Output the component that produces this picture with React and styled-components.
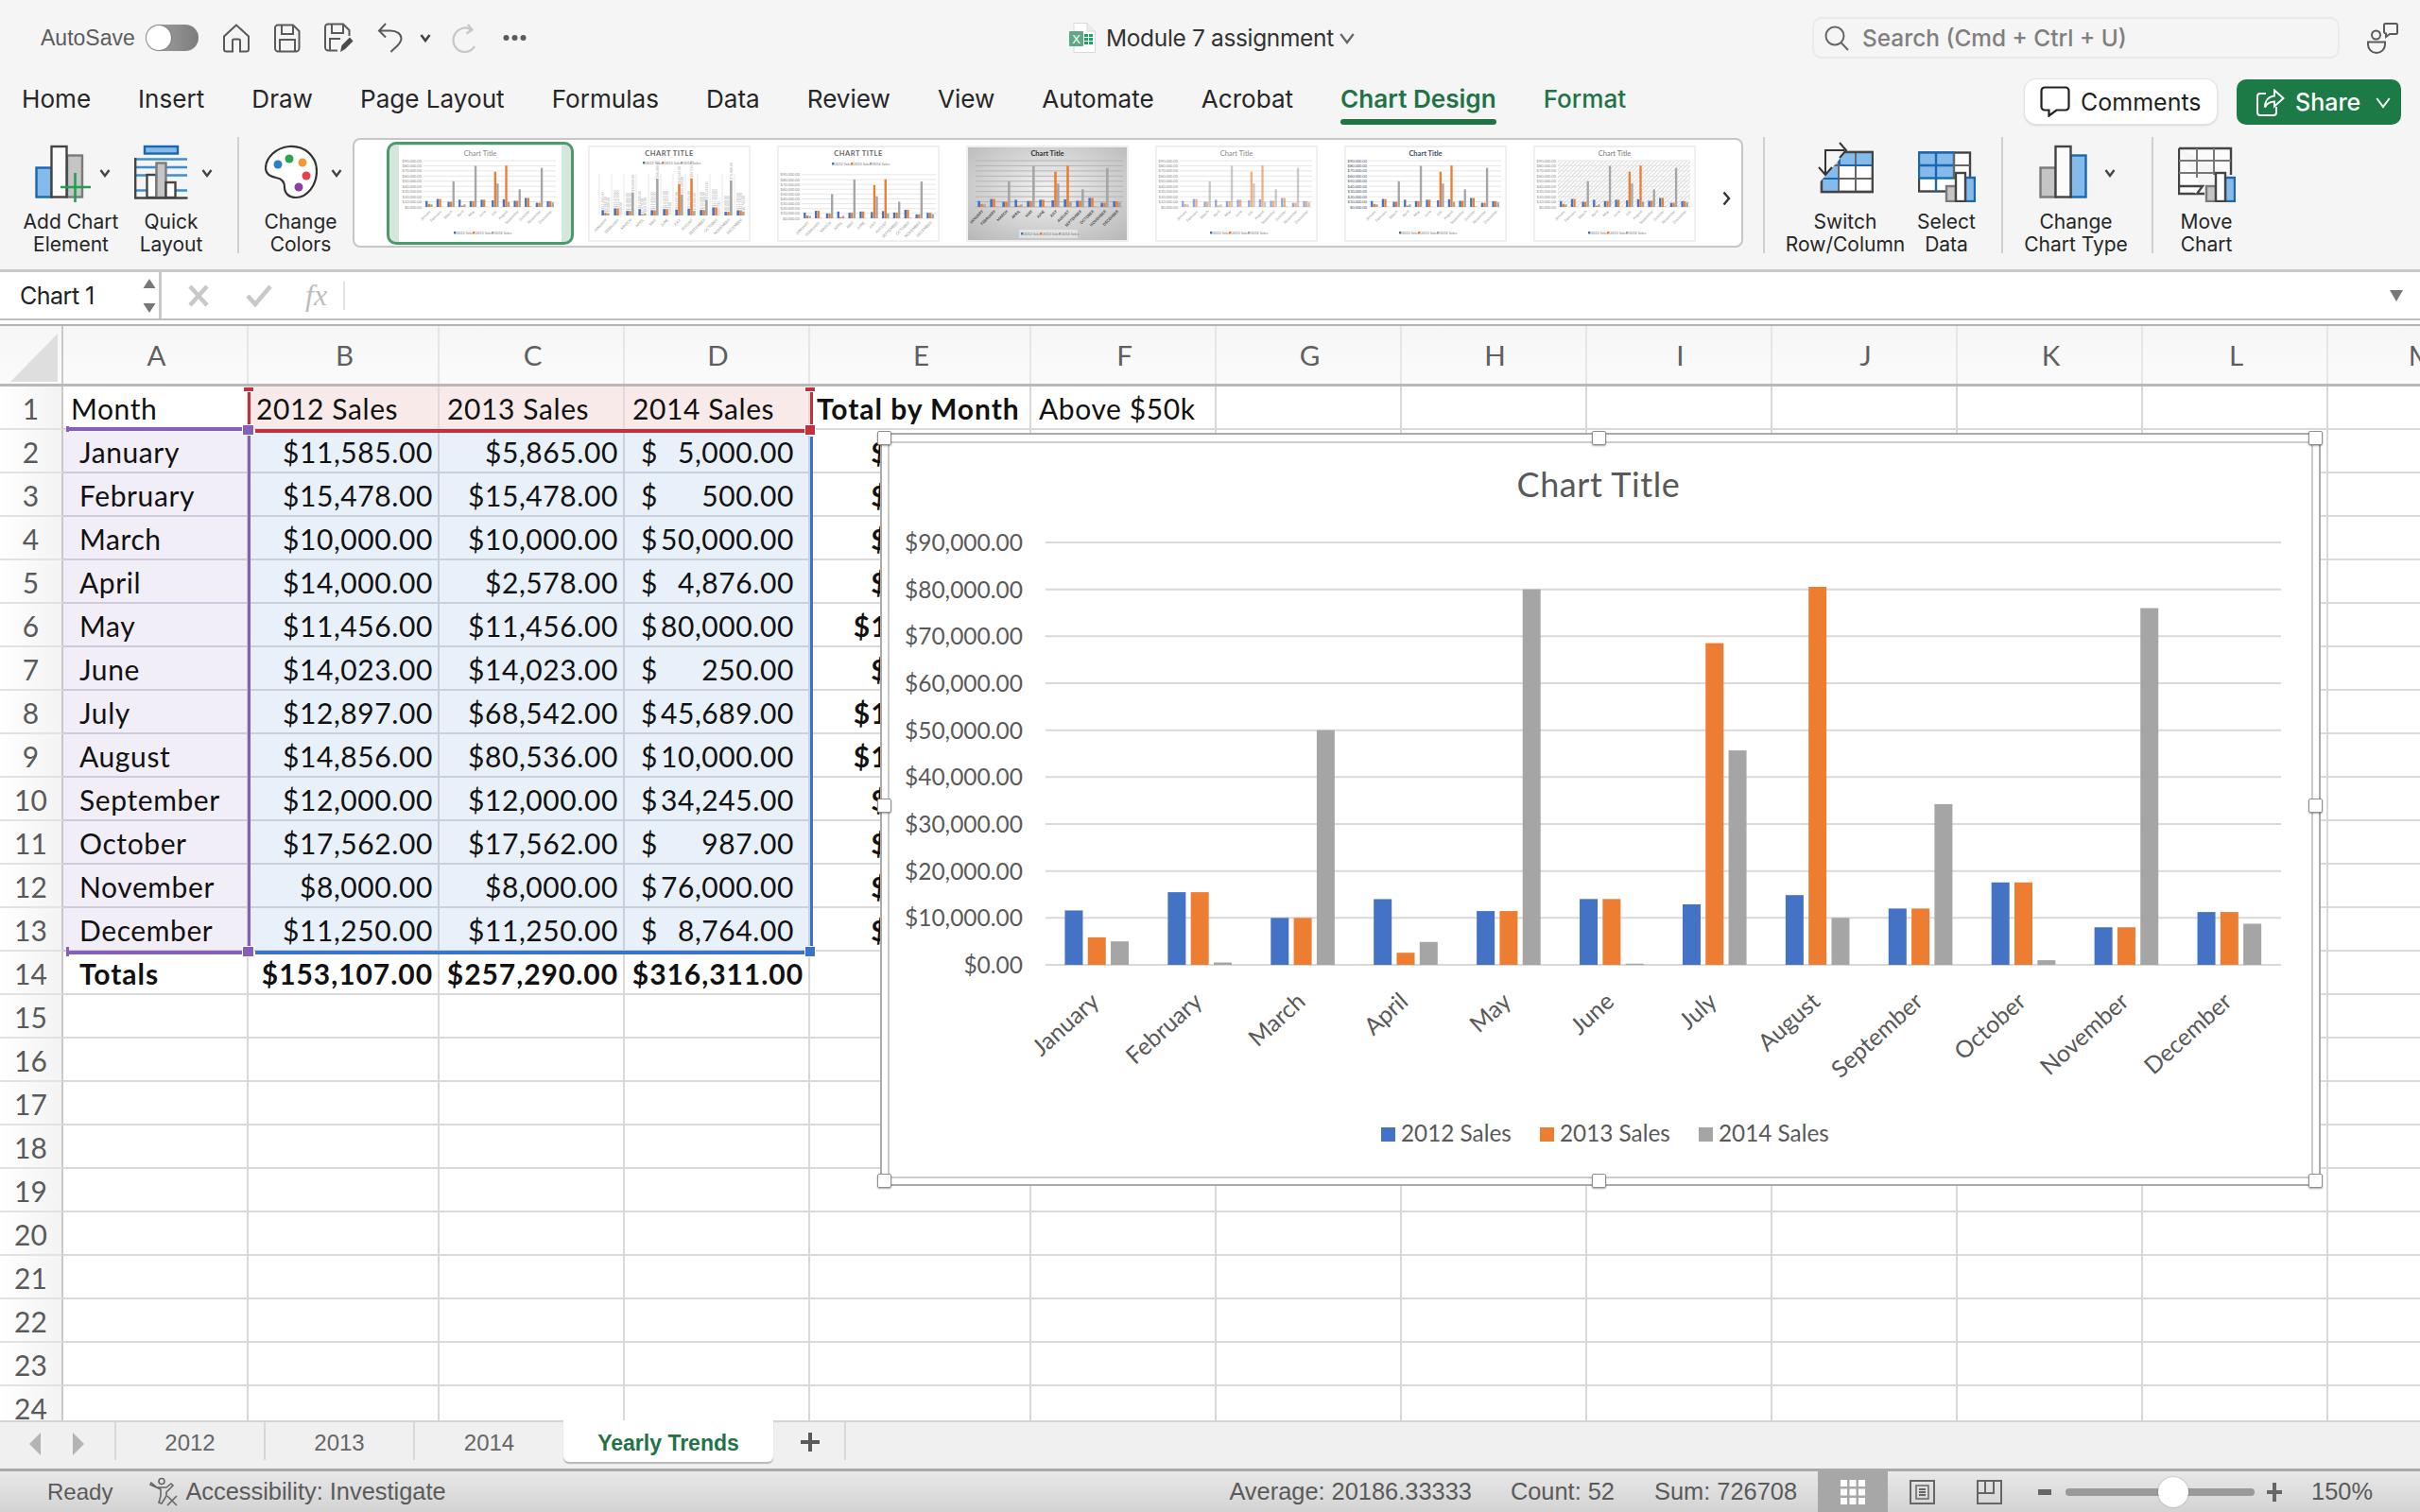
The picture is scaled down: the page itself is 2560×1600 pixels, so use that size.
import React from "react";
import styled, { createGlobalStyle, css } from "styled-components";

const UI = `Inter, "Liberation Sans", sans-serif`;
const HELV = `"Liberation Sans", Arial, sans-serif`;
const CALI = `Lato, "Liberation Sans", sans-serif`;

const BLUE = "#4472C4";
const ORANGE = "#ED7D31";
const GRAY = "#A5A5A5";

const sales = [
  ["January", 11585, 5865, 5000],
  ["February", 15478, 15478, 500],
  ["March", 10000, 10000, 50000],
  ["April", 14000, 2578, 4876],
  ["May", 11456, 11456, 80000],
  ["June", 14023, 14023, 250],
  ["July", 12897, 68542, 45689],
  ["August", 14856, 80536, 10000],
  ["September", 12000, 12000, 34245],
  ["October", 17562, 17562, 987],
  ["November", 8000, 8000, 76000],
  ["December", 11250, 11250, 8764],
];

const money = (n) =>
  n.toLocaleString("en-US", { minimumFractionDigits: 2, maximumFractionDigits: 2 });

const Global = createGlobalStyle`
  html, body { margin: 0; padding: 0; background: #fff; }
  body { width: 2560px; height: 1600px; overflow: hidden; font-family: ${UI}; }
  * { box-sizing: border-box; }
`;

const Page = styled.div`
  width: 2560px;
  height: 1600px;
  display: flex;
  flex-direction: column;
  background: #fff;
  overflow: hidden;
`;

/* title bar */
const TitleBar = styled.header`
  height: 75px;
  flex: none;
  background: #f5f5f5;
  display: grid;
  grid-template-columns: 1131px 786px 1fr;
  align-items: center;
  padding-top: 5px;
`;
const Quick = styled.div`
  display: flex;
  align-items: center;
  padding-left: 43px;
  gap: 25px;
  color: #555;
`;
const AutoSave = styled.span`
  font: 400 23px ${HELV};
  color: #5c5c5c;
  margin-right: -13px;
  width: 99px;
`;
const Toggle = styled.span`
  width: 56px;
  height: 28px;
  border-radius: 14px;
  background: linear-gradient(90deg, #a8a8a8, #7c7c7c);
  display: flex;
  align-items: center;
  padding-left: 1px;
  &::before {
    content: "";
    width: 26px;
    height: 26px;
    border-radius: 50%;
    background: #fff;
    box-shadow: 0 0 2px rgba(0, 0, 0, 0.5);
  }
`;
const QuickChevron = styled.span`
  display: flex;
  margin: 0 -3px 0 -7px;
`;
const DocTitle = styled.div`
  display: flex;
  align-items: center;
  gap: 11px;
  font: 400 24.5px ${UI};
  color: #333;
  letter-spacing: -0.35px;
`;
const DocChevron = styled.span`
  display: flex;
  margin-left: -6px;
`;
const Search = styled.div`
  width: 558px;
  height: 44px;
  border: 2px solid #ebebeb;
  border-radius: 10px;
  display: flex;
  align-items: center;
  gap: 14px;
  padding-left: 11px;
  font: 500 24.4px ${UI};
  color: #7f7f7f;
`;
const TopRight = styled.div`
  display: flex;
  align-items: center;
  gap: 29px;
`;

/* tab row */
const TabRow = styled.nav`
  height: 70px;
  flex: none;
  background: #f5f5f5;
  display: flex;
  align-items: flex-start;
  gap: 50px;
  padding: 0 20px 0 23px;
`;
const Tab = styled.span`
  position: relative;
  margin-top: 15px;
  font: 400 26.1px/30px ${UI};
  color: #262626;
  white-space: nowrap;
  ${(p) =>
    p.$green &&
    css`
      color: #217346;
      font-weight: 500;
    `}
  ${(p) =>
    p.$active &&
    css`
      font-weight: 600;
      &::after {
        content: "";
        position: absolute;
        left: 0;
        right: 0;
        bottom: -12px;
        height: 6px;
        border-radius: 3px;
        background: #217346;
      }
    `}
`;
const TabActions = styled.div`
  margin-left: auto;
  margin-top: 9px;
  display: flex;
  gap: 21px;
`;
const CommentsBtn = styled.button`
  width: 203px;
  height: 47px;
  border: 0;
  border-radius: 12px;
  background: #fff;
  box-shadow: 0 0 0 1px #e4e4e4, 0 1px 3px rgba(0, 0, 0, 0.25);
  display: flex;
  align-items: center;
  gap: 11px;
  padding: 0 0 0 16px;
  font: 400 25px ${UI};
  color: #1f1f1f;
`;
const ShareBtn = styled.button`
  width: 174px;
  height: 48px;
  border: 0;
  border-radius: 10px;
  background: #1b7a45;
  display: flex;
  align-items: center;
  padding: 0 0 0 20px;
  gap: 11px;
  font: 500 25px ${UI};
  color: #fff;
`;
const ShareChevron = styled.span`
  display: flex;
  margin-left: 4px;
`;

/* ribbon */
const Ribbon = styled.section`
  height: 140px;
  flex: none;
  background: #f5f5f5;
  display: flex;
  align-items: flex-start;
  padding-left: 12px;
`;
const Tool = styled.div`
  width: ${(p) => p.$w}px;
  flex: none;
  padding-top: 5px;
  display: flex;
  flex-direction: column;
  align-items: center;
`;
const ToolIcon = styled.div`
  height: 73px;
  padding-left: ${(p) => p.$pad || 0}px;
  display: flex;
  align-items: flex-start;
  justify-content: center;
`;
const ToolLabel = styled.div`
  font: 400 21px/24px ${UI};
  color: #262626;
  text-align: center;
  white-space: nowrap;
`;
const RibbonChevronSvg = styled.svg`
  margin: 28px 0 0 ${(p) => p.$gap}px;
`;
const RibbonChevron = ({ gap }) => (
  <RibbonChevronSvg $gap={gap} width="12" height="10" viewBox="0 0 12 10">
    <path d="M1.5 2 6 8 10.5 2" fill="none" stroke="#444" strokeWidth="2.4" />
  </RibbonChevronSvg>
);
const Sep = styled.i`
  flex: none;
  width: 2px;
  height: 123px;
  background: #d0d0d0;
  margin: 0 ${(p) => p.$r}px 0 ${(p) => p.$l}px;
`;
const Gallery = styled.div`
  width: 1471px;
  height: 116px;
  flex: none;
  margin-top: 1px;
  isolation: isolate;
  background: #fff;
  border: 2px solid #c6c6c6;
  border-radius: 8px;
  display: flex;
  gap: 28px;
  padding: 6px 11px 0 47px;
`;
const Thumb = styled.div`
  width: 172px;
  height: 102px;
  flex: none;
  position: relative;
  background: #fff;
  outline: ${(p) => (p.$selected ? "none" : "2px solid #eeeeee")};
  outline-offset: -2px;
  svg {
    display: block;
  }
  ${(p) =>
    p.$selected &&
    css`
      &::before {
        content: "";
        position: absolute;
        inset: -4px -13px -3px -13px;
        border: 3px solid #4a9a6c;
        border-radius: 10px;
        background: #d5e6dc;
        z-index: -1;
      }
    `}
`;
const GalleryNext = styled.svg`
  margin: 48px 0 0 auto;
  flex: none;
`;

/* formula bar */
const FormulaBar = styled.div`
  height: 54px;
  flex: none;
  background: #fff;
  border-top: 3px solid #c9c9c9;
  border-bottom: 2px solid #bdbdbd;
  display: flex;
  align-items: center;
  margin-bottom: 4px;
`;
const NameBox = styled.div`
  width: 171px;
  height: 100%;
  flex: none;
  border-right: 3px solid #c9c9c9;
  display: flex;
  align-items: center;
  justify-content: space-between;
  padding: 0 3px 0 21px;
  font: 400 25px ${UI};
  letter-spacing: -0.5px;
  color: #222;
`;
const FxGroup = styled.div`
  display: flex;
  align-items: center;
  gap: 39px;
  padding-left: 28px;
  color: #c8c8c8;
`;
const FxText = styled.span`
  font: italic 400 32px "Liberation Serif", serif;
  color: #bdbdbd;
  margin-left: -4px;
`;
const FxRule = styled.i`
  width: 2px;
  height: 30px;
  background: #e2e2e2;
  margin-left: -22px;
`;
const FormulaEnd = styled.svg`
  margin: 0 18px 0 auto;
`;

/* sheet */
const cols = "67px 196px 202px 196px 196px 234px repeat(8, 196px)";
const Sheet = styled.div`
  position: relative;
  height: 1160px;
  flex: none;
  overflow: hidden;
  background: #fff;
`;
const HeaderRow = styled.div`
  height: 66px;
  display: grid;
  grid-template-columns: ${cols};
  background: linear-gradient(#f6f6f6, #fbfbfb);
  border-top: 2px solid #b4b4b4;
  border-bottom: 3px solid #b8b8b8;
`;
const Corner = styled.div`
  position: relative;
  border-right: 2px solid #c8c8c8;
  &::after {
    content: "";
    position: absolute;
    left: 11px;
    top: 8px;
    width: 50px;
    height: 51px;
    background: #dedede;
    clip-path: polygon(100% 0, 100% 100%, 0 100%);
  }
`;
const ColHead = styled.div`
  display: flex;
  align-items: center;
  justify-content: center;
  padding-left: 3px;
  border-right: 2px solid #e6e6e6;
  font: 400 29.5px ${CALI};
  color: #5f5f5f;
`;
const Grid = styled.div`
  display: grid;
  grid-template-columns: ${cols};
  grid-auto-rows: 46px;
`;
const RowHead = styled.div`
  display: flex;
  align-items: center;
  justify-content: center;
  padding-top: 2px;
  background: linear-gradient(90deg, #fff, #f3f3f3);
  border-right: 2px solid #c8c8c8;
  border-bottom: 2px solid #e2e2e2;
  font: 400 30px ${CALI};
  color: #5a5a5a;
`;
const Cell = styled.div`
  display: flex;
  align-items: center;
  justify-content: ${(p) => (p.$right ? "flex-end" : p.$split ? "space-between" : "flex-start")};
  padding: ${(p) => (p.$split ? "2px 15px 0 17px" : `2px 5px 0 ${p.$indent ?? 8}px`)};
  background: ${(p) => p.$bg || "#fff"};
  border-right: 2px solid ${(p) => p.$line || "#d9d9d9"};
  border-bottom: 2px solid ${(p) => p.$line || "#d9d9d9"};
  font: ${(p) => (p.$bold ? 700 : 400)} 30px ${CALI};
  letter-spacing: ${(p) => (p.$bold ? 0.95 : 0.6)}px;
  color: #111;
  white-space: nowrap;
`;

/* coloured range markers of the selected chart */
const Mark = styled.i`
  position: absolute;
  display: block;
  left: ${(p) => p.$x}px;
  top: ${(p) => p.$y - 343}px;
  width: ${(p) => p.$w}px;
  height: ${(p) => p.$h}px;
  background: ${(p) => p.$c};
  ${(p) => p.$knob && "box-shadow: 0 0 0 1px #fff;"}
`;

/* chart object */
const ChartFrame = styled.div`
  position: absolute;
  left: 931px;
  top: 115px;
  width: 1524px;
  height: 797px;
  border: 2px solid #aaaaaa;
  padding: 7px 6px 6px 6px;
  background: #fff;
`;
const ChartBody = styled.div`
  width: 100%;
  height: 100%;
  border: 2px solid #cccccc;
  svg {
    display: block;
    margin: -2px;
  }
`;
const Handle = styled.i`
  position: absolute;
  width: 15px;
  height: 15px;
  left: ${(p) => p.$x - 931 - 2}px;
  top: ${(p) => p.$y - 458 - 2}px;
  background: #fff;
  border: 1px solid #8f8f8f;
  border-radius: 2px;
  box-shadow: 0 1px 2px rgba(0, 0, 0, 0.35);
`;

/* sheet tabs */
const SheetTabs = styled.div`
  height: 51px;
  flex: none;
  background: #f0f0f0;
  border-top: 2px solid #d4d4d4;
  display: flex;
  align-items: flex-start;
`;
const TabNav = styled.div`
  width: 121px;
  height: 40px;
  flex: none;
  display: flex;
  align-items: center;
  gap: 34px;
  padding: 5px 0 0 31px;
`;
const SheetTab = styled.div`
  width: ${(p) => p.$w}px;
  flex: none;
  height: ${(p) => (p.$active ? 44 : 40)}px;
  margin-top: ${(p) => (p.$active ? -2 : 0)}px;
  padding-top: 4px;
  border-left: ${(p) => (p.$active ? "none" : "2px solid #d8d8d8")};
  display: flex;
  align-items: center;
  justify-content: center;
  font: ${(p) => (p.$active ? 700 : 400)} ${(p) => (p.$active ? 23 : 24)}px ${HELV};
  color: ${(p) => (p.$active ? "#217346" : "#666")};
  ${(p) =>
    p.$active &&
    css`
      background: #fff;
      border-radius: 0 0 6px 6px;
      box-shadow: 0 2px 1px #b9b9b9;
    `}
`;
const AddSheet = styled.div`
  width: 77px;
  height: 40px;
  flex: none;
  padding: 2px 0 0 2px;
  border-right: 2px solid #d8d8d8;
  display: flex;
  align-items: center;
  justify-content: center;
`;

/* status bar */
const StatusBar = styled.footer`
  flex: 1;
  min-height: 0;
  background: linear-gradient(#e8e8e8, #d3d3d3);
  border-top: 3px solid #a9a9a9;
  display: flex;
  align-items: center;
  font: 400 25.4px ${HELV};
  color: #5a5a5a;
  padding: 0 50px;
`;
const Ready = styled.span`
  font-size: 24px;
`;
const Access = styled.div`
  display: flex;
  align-items: center;
  gap: 7px;
  margin-left: 39px;
`;
const Stat = styled.span`
  margin-left: ${(p) => (p.$auto ? "auto" : `${p.$ml}px`)};
  white-space: nowrap;
`;
const ViewBtn = styled.div`
  width: ${(p) => p.$w}px;
  margin-left: ${(p) => p.$ml || 0}px;
  align-self: stretch;
  flex: none;
  display: flex;
  align-items: center;
  justify-content: center;
  background: ${(p) => (p.$active ? "#a7a7a7" : "transparent")};
`;
const Zoom = styled.div`
  display: flex;
  align-items: center;
  margin-left: 17px;
`;
const Track = styled.div`
  position: relative;
  width: 200px;
  height: 8px;
  margin: 0 13px 0 15px;
  border-radius: 4px;
  background: #9a9a9a;
  &::after {
    content: "";
    position: absolute;
    left: 98px;
    top: -12px;
    width: 32px;
    height: 32px;
    border-radius: 50%;
    background: #fff;
    box-shadow: 0 0 2px rgba(0, 0, 0, 0.3);
  }
`;

/* small line icons */
const Chevron = ({ w = 12, h = 10, c = "#444", sw = 2.6 }) => (
  <svg width={w} height={h} viewBox="0 0 12 10" style={{ flex: "none" }}>
    <path d="M1.5 2 6 8 10.5 2" fill="none" stroke={c} strokeWidth={sw} />
  </svg>
);
const HomeIcon = () => (
  <svg width="30" height="31" viewBox="0 0 30 31" fill="none" stroke="#5a5a5a" strokeWidth="2">
    <path d="M15 1.5 2 13.5V27a2.5 2.5 0 0 0 2.5 2.5H11V18a1.5 1.5 0 0 1 1.5-1.5h5A1.5 1.5 0 0 1 19 18v11.5h6.5A2.5 2.5 0 0 0 28 27V13.5Z" />
  </svg>
);
const SaveIcon = () => (
  <svg width="28" height="31" viewBox="0 0 28 31" fill="none" stroke="#5a5a5a" strokeWidth="2">
    <path d="M4 1.5h16l6.5 6.5v18a3.5 3.5 0 0 1-3.5 3.5H4.5A3.5 3.5 0 0 1 1 26V4.5A3 3 0 0 1 4 1.5Z" />
    <path d="M8 2v9h12V2M6 29V17h16v12" />
  </svg>
);
const SaveAsIcon = () => (
  <svg width="31" height="33" viewBox="0 0 31 33" fill="none" stroke="#5a5a5a" strokeWidth="2">
    <path d="M14 29.5H4.5A3.5 3.5 0 0 1 1 26V4.5A3 3 0 0 1 4 1.5h16l6.5 6.5v6" />
    <path d="M8 2v9h12V2M6 29V17h11" />
    <path d="M17 31l1.5-7L27 15.5l3.5 4L22 28Z" fill="#4a4a4a" stroke="none" />
  </svg>
);
const UndoIcon = () => (
  <svg width="27" height="32" viewBox="0 0 27 32" fill="none" stroke="#5a5a5a" strokeWidth="2">
    <path d="M9 1 2 8.5l7 7M2 8.5h12C21 8.5 25.5 12 25.5 17c0 5.5-6.5 9-11 14" />
  </svg>
);
const RedoIcon = () => (
  <svg width="29" height="31" viewBox="0 0 29 31" fill="none" stroke="#c6c6c6" strokeWidth="2.2">
    <path d="M20 6.5C17.5 4.5 14 4 11.5 4.8 5.5 6.5 1.5 11.5 1.5 17.5 1.5 24.5 7 30 13.5 30c4.5 0 8.5-2.5 10.5-6" />
    <path d="M17 1l4.5 5.5-6 4" />
  </svg>
);
const Dots = () => (
  <svg width="25" height="8" viewBox="0 0 25 8" fill="#5a5a5a">
    <circle cx="3.5" cy="4" r="3" />
    <circle cx="12.5" cy="4" r="3" />
    <circle cx="21.5" cy="4" r="3" />
  </svg>
);
const ExcelDoc = () => (
  <svg width="28" height="32" viewBox="0 0 28 32" style={{ flex: "none" }}>
    <path d="M5 .5h14l8.5 8.5v22.5H5Z" fill="#fff" stroke="#d9d9d9" />
    <path d="M19 .5V9h8.5" fill="#ececec" stroke="#d9d9d9" />
    <g fill="#21a366">
      <rect x="16" y="12" width="4" height="3" />
      <rect x="21" y="12" width="4" height="3" />
      <rect x="16" y="16" width="4" height="3" />
      <rect x="21" y="16" width="4" height="3" />
      <rect x="16" y="20" width="4" height="3" />
      <rect x="21" y="20" width="4" height="3" />
    </g>
    <rect x="0" y="9" width="15" height="16" rx="1" fill="#5fa885" />
    <text x="7.5" y="22" textAnchor="middle" fontSize="13" fontFamily={HELV} fill="#fff">
      X
    </text>
  </svg>
);
const SearchIcon = () => (
  <svg width="26" height="27" viewBox="0 0 26 27" fill="none" stroke="#666" strokeWidth="2" style={{ flex: "none" }}>
    <circle cx="11" cy="11" r="9.5" />
    <path d="M17.5 18 25 26" />
  </svg>
);
const CoauthorIcon = () => (
  <svg width="34" height="33" viewBox="0 0 34 33" fill="none" stroke="#5a5a5a" strokeWidth="2">
    <circle cx="9.5" cy="13" r="4.5" />
    <path d="M1 20.5h18v2.5c0 5-4 9-9 9s-9-4-9-9Z" />
    <path d="M18 2.5A1.5 1.5 0 0 1 19.5 1h11A1.5 1.5 0 0 1 32 2.5v8A1.5 1.5 0 0 1 30.5 12H24l-4 3v-3.5A2 2 0 0 1 18 10Z" />
  </svg>
);
const BubbleIcon = () => (
  <svg width="32" height="33" viewBox="0 0 32 33" fill="none" stroke="#222" strokeWidth="2.2" style={{ flex: "none" }}>
    <path d="M5 1.5h22A3.5 3.5 0 0 1 30.5 5v17a3.5 3.5 0 0 1-3.5 3.5H17.5L9.5 31.5V25.5H5A3.5 3.5 0 0 1 1.5 22V5A3.5 3.5 0 0 1 5 1.5Z" />
  </svg>
);
const ShareIcon = () => (
  <svg width="31" height="29" viewBox="0 0 31 29" fill="none" stroke="#fff" strokeWidth="2" style={{ flex: "none" }}>
    <path d="M22 19v6a3 3 0 0 1-3 3H5a3 3 0 0 1-3-3V8a3 3 0 0 1 3-3h6" />
    <path d="M20 1.5 29.5 10 20 18.5v-5c-5 0-8 2-10 6 0-7 4-11.5 10-12Z" />
  </svg>
);
const Glyph = ({ d, w = 14, h = 14, c = "#777" }) => (
  <svg width={w} height={h} viewBox={`0 0 ${w} ${h}`} style={{ flex: "none" }}>
    <path d={d} fill={c} />
  </svg>
);
const AccessIcon = () => (
  <svg width="31" height="31" viewBox="0 0 31 31" fill="none" stroke="#666" strokeWidth="1.6">
    <circle cx="13" cy="4.5" r="3" />
    <path d="M2 6l6 5h10l5-4 2 2-7 7v4l-5 8-3-1 2-7V13L1 8Z" />
    <path d="M19 20l10 10M29 20 19 30" />
  </svg>
);

/* ribbon pictures, drawn in page y minus 150 */
const S = { blue: "#85bbea", blueLine: "#1a66b0", dark: "#444", gray: "#c5c5c5", grayLine: "#7a7a7a" };
const Bar = ({ x, y, w, h, fill = "#fff", stroke = S.dark }) => (
  <rect x={x} y={y} width={w} height={h} fill={fill} stroke={stroke} strokeWidth="2.4" />
);
const AddChartIcon = () => (
  <svg width="60" height="64" viewBox="0 0 60 64">
    <Bar x="1.5" y="27.5" w="16" h="31" fill={S.blue} stroke={S.blueLine} />
    <Bar x="34" y="14.5" w="16" h="44" fill={S.gray} stroke={S.grayLine} />
    <Bar x="17.5" y="5" w="16" h="53.5" fill="#fbfbfb" />
    <path d="M27 48h32M42.5 33v31" stroke="#21a150" strokeWidth="2.6" />
  </svg>
);
const QuickLayoutIcon = () => (
  <svg width="57" height="64" viewBox="0 0 57 64">
    <Bar x="11" y="5" w="35" h="7.5" fill={S.blue} stroke={S.blueLine} />
    <path d="M1 18.5h55M1 27h55M1 35.5h55M1 51.5h55" stroke="#3b8fd3" strokeWidth="2.4" />
    <Bar x="13.5" y="35" w="10" h="24" fill="#fff" />
    <Bar x="23.5" y="22.5" w="10" h="36.5" fill={S.gray} stroke={S.grayLine} />
    <Bar x="33.5" y="43" w="10" h="16" fill="#fff" />
    <path d="M1.2 17v42.5H56.5" fill="none" stroke={S.dark} strokeWidth="2.4" />
  </svg>
);
const PaletteIcon = () => (
  <svg width="56" height="64" viewBox="0 0 56 64">
    <path
      d="M26 5C12 6 1 17 1 28c0 7 6 9 11 10 6 1 9 4 9 10 0 7 5 11 12 11 12 0 22-13 22-28C55 15 42 4 26 5Z"
      fill="#fff"
      stroke="#333"
      strokeWidth="2.2"
    />
    <circle cx="14" cy="24" r="4.5" fill="#2c7fc2" />
    <circle cx="26" cy="18" r="4.5" fill="#2ea24f" />
    <circle cx="40" cy="22" r="4.5" fill="#ee9a3a" />
    <circle cx="44" cy="36" r="4.5" fill="#e8404a" />
    <circle cx="36" cy="48" r="4.5" fill="#8d3fa8" />
  </svg>
);
const SwitchIcon = () => (
  <svg width="60" height="64" viewBox="0 0 60 64">
    <rect x="5" y="11" width="54" height="42" fill="#fff" stroke={S.dark} strokeWidth="2.4" />
    <path d="M5 11h54v14H24v14H5Z" fill={S.blue} />
    <path d="M5 39h19v14H5Z" fill={S.blue} />
    <path d="M23 11v42M41 11v42M5 25h54M5 39h54" stroke="#666" strokeWidth="2" />
    <path d="M5 39h19M24 11v14M24 25h35" stroke={S.blueLine} strokeWidth="2" />
    <rect x="5" y="11" width="54" height="42" fill="none" stroke={S.dark} strokeWidth="2.4" />
    <path d="M2 8H33L2 44Z" fill="#f5f5f5" />
    <path d="M9 35V9h20M24 1l7 8-7 8M2 27l7 8 7-8" fill="none" stroke="#333" strokeWidth="2" />
  </svg>
);
const SelectDataIcon = () => (
  <svg width="61" height="64" viewBox="0 0 61 64">
    <rect x="1" y="11.5" width="54" height="41" fill="#fff" stroke={S.dark} strokeWidth="2.4" />
    <rect x="1" y="11.5" width="37" height="27" fill={S.blue} stroke={S.blueLine} strokeWidth="2.4" />
    <path d="M19 11.5v41M1 25h37" stroke={S.blueLine} strokeWidth="2.4" />
    <path d="M38 11.5v27M38 25h17" stroke="#666" strokeWidth="2" />
    <Bar x="30" y="47" w="10" h="16" fill={S.gray} stroke={S.grayLine} />
    <Bar x="50" y="38" w="10" h="25" fill={S.blue} stroke={S.blueLine} />
    <Bar x="40" y="33" w="10" h="30" fill="#fff" />
  </svg>
);
const ChartTypeIcon = () => (
  <svg width="51" height="64" viewBox="0 0 51 64">
    <Bar x="1.5" y="27.5" w="16" h="31" fill={S.gray} stroke={S.grayLine} />
    <Bar x="33.5" y="14.5" w="16" h="44" fill={S.blue} stroke={S.blueLine} />
    <Bar x="17.5" y="5" w="16" h="53.5" fill="#fbfbfb" />
  </svg>
);
const MoveChartIcon = () => (
  <svg width="61" height="64" viewBox="0 0 61 64">
    <path d="M1 7h55v28M28 55H1V7" fill="#fbfbfb" stroke={S.dark} strokeWidth="2.4" />
    <path d="M20 7v31M38 7v28M1 20h55M1 33h37" stroke="#777" strokeWidth="2" />
    <path d="M1 47h25l-6 8" fill="#fff" stroke={S.dark} strokeWidth="2.4" />
    <Bar x="30" y="47" w="10" h="16" fill={S.gray} stroke={S.grayLine} />
    <Bar x="50" y="38" w="10" h="25" fill={S.blue} stroke={S.blueLine} />
    <Bar x="40" y="33" w="10" h="30" fill="#fff" />
  </svg>
);

/* gallery thumbnails */
const thumbs = [
  { title: "Chart Title", x0: 26, x1: 166, y0: 65, top: 16, leg: 94, yAxis: true, selected: true },
  { title: "CHART TITLE", titleWeight: 700, spaced: true, titleFill: "#666", x0: 12, x1: 168, y0: 74, top: 30, unit: 39 / 80, leg: 20, vgrid: true, labels: "#aaa", upper: true, noH: true },
  { title: "CHART TITLE", titleWeight: 700, spaced: true, titleFill: "#666", x0: 26, x1: 168, y0: 77, top: 30, unit: 41 / 80, leg: 21, yAxis: true, upper: true },
  { title: "Chart Title", titleWeight: 700, titleFill: "#333", x0: 10, x1: 166, y0: 65, top: 16, leg: 95, legBox: true, dark: true, upper: true },
  { title: "Chart Title", x0: 26, x1: 166, y0: 65, top: 16, leg: 94, yAxis: true, pale: true },
  { title: "Chart Title", titleWeight: 700, titleFill: "#3b4a66", x0: 26, x1: 166, y0: 65, top: 16, leg: 94, yAxis: true, axisFill: "#3b4a66" },
  { title: "Chart Title", titleFill: "#777", x0: 26, x1: 166, y0: 65, top: 16, leg: 94, yAxis: true, hatch: true },
];

const MiniChart = ({ v, i }) => {
  const unit = v.unit || (v.y0 - v.top) / 90;
  const step = (v.x1 - v.x0) / 12;
  const bw = step * 0.2;
  const axisFill = v.axisFill || "#8a8a8a";
  return (
    <svg width="172" height="102" viewBox="0 0 172 102">
      <defs>
        <radialGradient id={`mini-bg-${i}`} cx="50%" cy="45%" r="75%">
          <stop offset="0" stopColor="#f4f4f4" />
          <stop offset="1" stopColor="#b4b4b4" />
        </radialGradient>
        <pattern id={`mini-hatch-${i}`} width="3" height="3" patternUnits="userSpaceOnUse" patternTransform="rotate(45)">
          <rect width="3" height="3" fill="#fff" />
          <rect width="1" height="3" fill="#d9d9d9" />
        </pattern>
      </defs>
      {v.dark && <rect width="172" height="102" fill={`url(#mini-bg-${i})`} />}
      {v.hatch && <rect x={v.x0} y={v.top} width={v.x1 - v.x0} height={v.y0 - v.top} fill={`url(#mini-hatch-${i})`} />}
      <text x="86" y="11" textAnchor="middle" fontSize="7.5" fontFamily={CALI} fontWeight={v.titleWeight || 400} letterSpacing={v.spaced ? 0.5 : 0} fill={v.titleFill || "#888"}>
        {v.title}
      </text>
      {!v.noH &&
        [0, 1, 2, 3, 4, 5, 6, 7, 8, 9].map((n) => (
          <g key={n}>
            <line x1={v.x0} x2={v.x1} y1={v.y0 - n * 10 * unit} y2={v.y0 - n * 10 * unit} stroke={v.dark ? "#b4b4b4" : "#e6e6e6"} strokeWidth="1" />
            {v.yAxis && (
              <text x={v.x0 - 2} y={v.y0 - n * 10 * unit + 1.5} textAnchor="end" fontSize="4" fontFamily={CALI} fill={axisFill}>
                {`$${n * 10},000.00`}
              </text>
            )}
          </g>
        ))}
      {v.vgrid &&
        sales.map((_, n) => (
          <line key={n} x1={v.x0 + n * step} x2={v.x0 + n * step} y1={v.top} y2={v.y0} stroke="#e8e8e8" strokeWidth="1" />
        ))}
      {sales.map((row, n) => (
        <g key={row[0]}>
          {[BLUE, ORANGE, GRAY].map((c, s) => {
            const h = (row[s + 1] / 1000) * unit;
            const x = v.x0 + n * step + step / 2 - bw * 1.6 + s * bw * 1.1;
            const y = v.y0 - h;
            return (
              <g key={c}>
                <rect x={x} y={y} width={bw} height={h} fill={c} opacity={v.pale ? 0.6 : 1} />
                {v.labels && (
                  <text transform={`translate(${x + bw} ${y - 1}) rotate(-90)`} fontSize="3.5" fontFamily={CALI} fill={v.labels}>
                    {`$${money(row[s + 1])}`}
                  </text>
                )}
              </g>
            );
          })}
          <text
            transform={`translate(${v.x0 + n * step + step / 2 + 2} ${v.y0 + 5}) rotate(-45)`}
            textAnchor="end"
            fontSize="4"
            fontFamily={CALI}
            fontWeight={v.dark ? 700 : 400}
            fill={v.dark ? "#444" : "#999"}
          >
            {v.upper ? row[0].toUpperCase() : row[0]}
          </text>
        </g>
      ))}
      {v.legBox && <rect x="56" y={v.leg - 6} width="62" height="9" fill="#fff" opacity="0.45" />}
      {["2012 Sales", "2013 Sales", "2014 Sales"].map((t, s) => (
        <g key={t}>
          <rect x={58 + s * 20} y={v.leg - 3} width="2.5" height="2.5" fill={[BLUE, ORANGE, GRAY][s]} />
          <text x={61 + s * 20} y={v.leg} fontSize="3.8" fontFamily={CALI} fill="#777">
            {t}
          </text>
        </g>
      ))}
    </svg>
  );
};

/* the big chart, drawn in page coordinates */
const PLOT_X0 = 1106;
const PLOT_X1 = 2413;
const PLOT_Y0 = 1021;
const PER_10K = 49.67;

const SalesChart = () => {
  const step = (PLOT_X1 - PLOT_X0) / 12;
  return (
    <svg width="1506" height="778" viewBox="939 467 1506 778">
      <text x="1691" y="526" textAnchor="middle" fontSize="36" fontFamily={CALI} fill="#595959" letterSpacing="0.6">
        Chart Title
      </text>
      {[0, 1, 2, 3, 4, 5, 6, 7, 8, 9].map((n) => {
        const y = PLOT_Y0 - n * PER_10K;
        return (
          <g key={n}>
            <line x1={PLOT_X0} x2={PLOT_X1} y1={y} y2={y} stroke="#d9d9d9" strokeWidth="2" />
            <text x="1082" y={y + 9} textAnchor="end" fontSize="24.5" fontFamily={CALI} fill="#595959">
              {`$${money(n * 10000)}`}
            </text>
          </g>
        );
      })}
      {sales.map((row, n) => {
        const left = PLOT_X0 + n * step + step / 2 - 34;
        return (
          <g key={row[0]}>
            {[BLUE, ORANGE, GRAY].map((c, s) => {
              const h = (row[s + 1] / 10000) * PER_10K;
              return <rect key={c} x={left + s * 24.3} y={PLOT_Y0 - h} width="19" height={h} fill={c} />;
            })}
            <text
              transform={`translate(${left + 38} 1062) rotate(-42)`}
              textAnchor="end"
              fontSize="25"
              fontFamily={CALI}
              fill="#595959"
            >
              {row[0]}
            </text>
          </g>
        );
      })}
      {[
        [1461, "2012 Sales", BLUE],
        [1629, "2013 Sales", ORANGE],
        [1797, "2014 Sales", GRAY],
      ].map(([x, t, c]) => (
        <g key={t}>
          <rect x={x} y="1193" width="15" height="15" fill={c} />
          <text x={x + 21} y="1208" fontSize="24.3" fontFamily={CALI} fill="#595959">
            {t}
          </text>
        </g>
      ))}
    </svg>
  );
};

const PURPLE = "#8560b8";
const RED = "#c0323f";
const LINE_BLUE = "#3b73c8";
const marks = [
  [70, 451, 3, 6, PURPLE],
  [73, 452, 184, 4, PURPLE],
  [262, 460, 3, 542, PURPLE],
  [70, 1002, 3, 10, PURPLE],
  [73, 1006, 184, 4, PURPLE],
  [262, 414, 3, 36, RED],
  [857, 414, 3, 36, RED],
  [270, 454, 582, 4, RED],
  [857, 462, 3, 540, LINE_BLUE],
  [270, 1006, 582, 4, LINE_BLUE],
];
const knobs = [
  [258, 410, 10, 4, RED],
  [852, 410, 10, 4, RED],
  [852, 450, 10, 10, RED],
  [257, 450, 11, 10, PURPLE],
  [257, 1002, 11, 10, PURPLE],
  [852, 1002, 10, 10, LINE_BLUE],
];

const letters = "ABCDEFGHIJKLM".split("");

const cellFor = (r, c) => {
  const row = sales[r - 2];
  if (r === 1) {
    const heads = ["Month", "2012 Sales", "2013 Sales", "2014 Sales", "Total by Month", "Above $50k"];
    const tinted = c >= 1 && c <= 3;
    return {
      text: heads[c],
      props: {
        $bg: tinted ? "#f9eaea" : undefined,
        $line: tinted ? "#e6d8d8" : undefined,
        $bold: c === 4,
        $indent: c === 4 ? 7 : 8,
      },
    };
  }
  if (row) {
    if (c === 0) return { text: row[0], props: { $bg: "#f1eef8", $line: "#cfcbdc", $indent: 17 } };
    if (c === 1 || c === 2)
      return { text: `$${money(row[c])}`, props: { $bg: "#e8f0fa", $line: "#c8d0dc", $right: true } };
    if (c === 3)
      return {
        text: (
          <>
            <span>$</span>
            <span>{money(row[3])}</span>
          </>
        ),
        props: { $bg: "#e8f0fa", $line: "#c8d0dc", $split: true },
      };
    if (c === 4)
      return { text: `$${money(row[1] + row[2] + row[3])}`, props: { $bold: true, $right: true } };
  }
  if (r === 14) {
    if (c === 0) return { text: "Totals", props: { $bold: true, $indent: 17 } };
    if (c >= 1 && c <= 3) {
      const sum = sales.reduce((acc, x) => acc + x[c], 0);
      return { text: `$${money(sum)}`, props: { $bold: true, $right: true } };
    }
  }
  return { text: null, props: {} };
};

export default function App() {
  const rows = Array.from({ length: 24 }, (_, i) => i + 1);
  return (
    <Page>
      <Global />
      <TitleBar>
        <Quick>
          <AutoSave>AutoSave</AutoSave>
          <Toggle />
          <HomeIcon />
          <SaveIcon />
          <SaveAsIcon />
          <UndoIcon />
          <QuickChevron>
            <Chevron />
          </QuickChevron>
          <RedoIcon />
          <Dots />
        </Quick>
        <DocTitle>
          <ExcelDoc />
          Module 7 assignment
          <DocChevron>
            <Chevron w={18} h={15} c="#666" sw={1.5} />
          </DocChevron>
        </DocTitle>
        <TopRight>
          <Search>
            <SearchIcon />
            Search (Cmd + Ctrl + U)
          </Search>
          <CoauthorIcon />
        </TopRight>
      </TitleBar>

      <TabRow>
        {["Home", "Insert", "Draw", "Page Layout", "Formulas", "Data", "Review", "View", "Automate", "Acrobat"].map((t) => (
          <Tab key={t}>{t}</Tab>
        ))}
        <Tab $green $active>
          Chart Design
        </Tab>
        <Tab $green>Format</Tab>
        <TabActions>
          <CommentsBtn>
            <BubbleIcon />
            Comments
          </CommentsBtn>
          <ShareBtn>
            <ShareIcon />
            Share
            <ShareChevron>
              <Chevron w={18} h={15} c="#fff" sw={1.3} />
            </ShareChevron>
          </ShareBtn>
        </TabActions>
      </TabRow>

      <Ribbon>
        <Tool $w={126}>
          <ToolIcon $pad={4}>
            <AddChartIcon />
            <RibbonChevron gap={8} />
          </ToolIcon>
          <ToolLabel>
            Add Chart
            <br />
            Element
          </ToolLabel>
        </Tool>
        <Tool $w={86}>
          <ToolIcon $pad={4}>
            <QuickLayoutIcon />
            <RibbonChevron gap={14} />
          </ToolIcon>
          <ToolLabel>
            Quick
            <br />
            Layout
          </ToolLabel>
        </Tool>
        <Sep $l={27} $r={10} />
        <Tool $w={110}>
          <ToolIcon $pad={6}>
            <PaletteIcon />
            <RibbonChevron gap={14} />
          </ToolIcon>
          <ToolLabel>
            Change
            <br />
            Colors
          </ToolLabel>
        </Tool>
        <Gallery>
          {thumbs.map((v, i) => (
            <Thumb key={i} $selected={v.selected}>
              <MiniChart v={v} i={i} />
            </Thumb>
          ))}
          <GalleryNext width="9" height="16" viewBox="0 0 9 16">
            <path d="M1.5 1.5 7 8l-5.5 6.5" fill="none" stroke="#333" strokeWidth="2.4" />
          </GalleryNext>
        </Gallery>
        <Sep $l={21} $r={20} />
        <Tool $w={130}>
          <ToolIcon>
            <SwitchIcon />
          </ToolIcon>
          <ToolLabel>
            Switch
            <br />
            Row/Column
          </ToolLabel>
        </Tool>
        <Tool $w={84}>
          <ToolIcon>
            <SelectDataIcon />
          </ToolIcon>
          <ToolLabel>
            Select
            <br />
            Data
          </ToolLabel>
        </Tool>
        <Sep $l={16} $r={12} />
        <Tool $w={130}>
          <ToolIcon $pad={3}>
            <ChartTypeIcon />
            <RibbonChevron gap={18} />
          </ToolIcon>
          <ToolLabel>
            Change
            <br />
            Chart Type
          </ToolLabel>
        </Tool>
        <Sep $l={15} $r={11} />
        <Tool $w={90}>
          <ToolIcon>
            <MoveChartIcon />
          </ToolIcon>
          <ToolLabel>
            Move
            <br />
            Chart
          </ToolLabel>
        </Tool>
      </Ribbon>

      <FormulaBar>
        <NameBox>
          Chart 1
          <svg width="14" height="36" viewBox="0 0 14 36" fill="#777">
            <path d="M7 0l6.5 10H.5ZM7 36 .5 26h13Z" />
          </svg>
        </NameBox>
        <FxGroup>
          <svg width="22" height="24" viewBox="0 0 22 24" fill="none" stroke="#c8c8c8" strokeWidth="4.5">
            <path d="M2 2l18 20M20 2 2 22" />
          </svg>
          <svg width="28" height="24" viewBox="0 0 28 24" fill="none" stroke="#c8c8c8" strokeWidth="4.5">
            <path d="M2 12l8 9L26 2" />
          </svg>
          <FxText>fx</FxText>
          <FxRule />
        </FxGroup>
        <FormulaEnd width="14" height="12" viewBox="0 0 14 12">
          <path d="M0 0h14L7 12Z" fill="#777" />
        </FormulaEnd>
      </FormulaBar>

      <Sheet>
        <HeaderRow>
          <Corner />
          {letters.map((l) => (
            <ColHead key={l}>{l}</ColHead>
          ))}
        </HeaderRow>
        <Grid>
          {rows.map((r) => (
            <React.Fragment key={r}>
              <RowHead>{r}</RowHead>
              {letters.map((l, c) => {
                const { text, props } = cellFor(r, c);
                return (
                  <Cell key={l} {...props}>
                    {text}
                  </Cell>
                );
              })}
            </React.Fragment>
          ))}
        </Grid>
        {marks.map(([x, y, w, h, c], i) => (
          <Mark key={i} $x={x} $y={y} $w={w} $h={h} $c={c} />
        ))}
        {knobs.map(([x, y, w, h, c], i) => (
          <Mark key={i} $knob $x={x} $y={y} $w={w} $h={h} $c={c} />
        ))}
        <ChartFrame>
          <ChartBody>
            <SalesChart />
          </ChartBody>
          {[
            [928, 456],
            [1684, 456],
            [2442, 456],
            [928, 845],
            [2442, 845],
            [928, 1242],
            [1684, 1242],
            [2442, 1242],
          ].map(([x, y]) => (
            <Handle key={`${x}-${y}`} $x={x} $y={y} />
          ))}
        </ChartFrame>
      </Sheet>

      <SheetTabs>
        <TabNav>
          <Glyph w={12} h={24} c="#b4b4b4" d="M12 0v24L0 12Z" />
          <Glyph w={12} h={24} c="#b4b4b4" d="M0 0v24l12-12Z" />
        </TabNav>
        <SheetTab $w={158}>2012</SheetTab>
        <SheetTab $w={158}>2013</SheetTab>
        <SheetTab $w={159}>2014</SheetTab>
        <SheetTab $active $w={222}>
          Yearly Trends
        </SheetTab>
        <AddSheet>
          <Glyph w={20} h={20} c="#5a5a5a" d="M8 0h4v8h8v4h-8v8H8v-8H0V8h8Z" />
        </AddSheet>
      </SheetTabs>

      <StatusBar>
        <Ready>Ready</Ready>
        <Access>
          <AccessIcon />
          Accessibility: Investigate
        </Access>
        <Stat $auto>Average: 20186.33333</Stat>
        <Stat $ml={41}>Count: 52</Stat>
        <Stat $ml={42}>Sum: 726708</Stat>
        <ViewBtn $active $w={74} $ml={22}>
          <svg width="26" height="26" viewBox="0 0 26 26" fill="#fff">
            <path d="M0 0h7v7H0ZM9.5 0h7v7h-7ZM19 0h7v7h-7ZM0 9.5h7v7H0ZM9.5 9.5h7v7h-7ZM19 9.5h7v7h-7ZM0 19h7v7H0ZM9.5 19h7v7h-7ZM19 19h7v7h-7Z" />
          </svg>
        </ViewBtn>
        <ViewBtn $w={72}>
          <svg width="27" height="26" viewBox="0 0 27 26" fill="none" stroke="#666" strokeWidth="2">
            <rect x="1" y="1" width="25" height="24" />
            <path d="M7 6h13v14H7Z" strokeWidth="1.5" />
            <path d="M10 10h7M10 13h7M10 16h7" />
          </svg>
        </ViewBtn>
        <ViewBtn $w={70}>
          <svg width="27" height="26" viewBox="0 0 27 26" fill="none" stroke="#666" strokeWidth="2">
            <rect x="1" y="1" width="25" height="24" />
            <path d="M9 1v13H1M9 14h9V1" />
          </svg>
        </ViewBtn>
        <Zoom>
          <Glyph w={14} h={6} c="#666" d="M0 0h14v6H0Z" />
          <Track />
          <Glyph w={16} h={20} c="#666" d="M6 0h4v8h6v4h-6v8H6v-8H0V8h6Z" />
        </Zoom>
        <Stat $ml={31}>150%</Stat>
      </StatusBar>
    </Page>
  );
}
